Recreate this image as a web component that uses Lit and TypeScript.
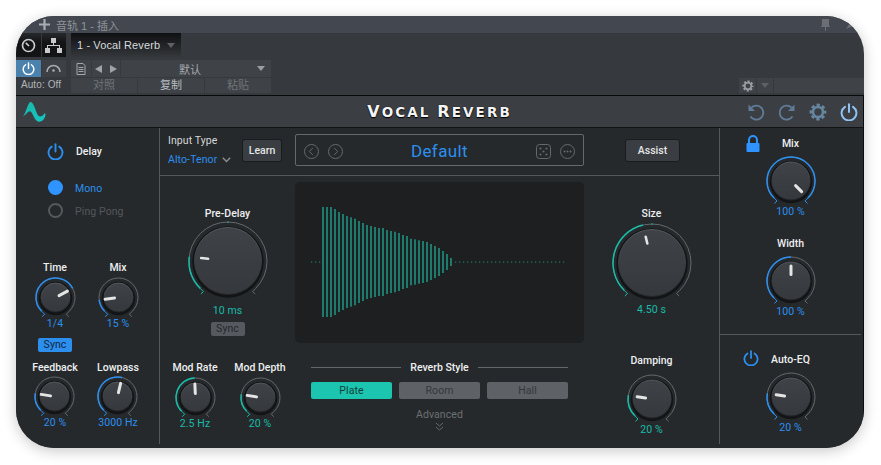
import { LitElement, html, css, svg } from "lit";
import { customElement } from "lit/decorators.js";

const BLUE = "#2c8fee";
const TEAL = "#19bba7";
const pt = (a: number, r: number, c: number) => {
  const t = (a * Math.PI) / 180;
  return [c + r * Math.sin(t), c - r * Math.cos(t)];
};
const f = (n: number) => n.toFixed(2);
const arc = (a0: number, a1: number, r: number, c: number) => {
  const [x0, y0] = pt(a0, r, c);
  const [x1, y1] = pt(a1, r, c);
  return `M${f(x0)} ${f(y0)}A${r} ${r} 0 ${a1 - a0 > 180 ? 1 : 0} 1 ${f(x1)} ${f(y1)}`;
};

type K = { label: string; value: string; v: number; cls: string; color: string; mark?: boolean };
const dims: Record<string, { r: number; cap: number; p0: number; p1: number; w: number; box: number }> = {
  s: { r: 19.5, cap: 14.5, p0: 4, p1: 13.5, w: 3, box: 41 },
  m: { r: 24, cap: 19, p0: 6.5, p1: 15, w: 3, box: 50 },
  l: { r: 39, cap: 33.5, p0: 20, p1: 27, w: 2.6, box: 80 },
};

function dial(k: K) {
  const size = k.cls.split(" ")[0];
  const d = dims[size];
  const c = d.box / 2;
  const ang = -135 + 270 * k.v;
  const [px0, py0] = pt(ang, d.p0, c);
  const [px1, py1] = pt(ang, d.p1, c);
  const [ex, ey] = pt(-135, d.r, c);
  const [rx, ry] = pt(135, d.r, c);
  const hookL = `M${f(ex)} ${f(ey)}l3 3l-2.6 2.4`;
  const hookR = `M${f(rx)} ${f(ry)}l-3 3l2.6 2.4`;
  const color = k.color === "blue" ? BLUE : TEAL;
  const full = k.v >= 1;
  return html`<svg class="dial" width=${d.box} height=${d.box} viewBox="0 0 ${d.box} ${d.box}">
    <defs>
      <linearGradient id="capg" x1="0" y1="0" x2="0" y2="1">
        <stop offset="0" stop-color="#3f4246"></stop>
        <stop offset="1" stop-color="#35383c"></stop>
      </linearGradient>
      <linearGradient id="rimg" x1="0" y1="0" x2="0" y2="1">
        <stop offset="0" stop-color="#55585c"></stop>
        <stop offset="0.5" stop-color="#3c3f43"></stop>
        <stop offset="1" stop-color="#222427"></stop>
      </linearGradient>
    </defs>
    ${svg`
      <path d=${arc(-135, 135, d.r, c)} fill="none" stroke="#66696c" stroke-width="1"></path>
      <path d=${hookR} fill="none" stroke=${full ? color : "#66696c"} stroke-width="1"></path>
      <path d=${arc(-135, ang, d.r, c)} fill="none" stroke=${color} stroke-width="1.5"></path>
      <path d=${hookL} fill="none" stroke=${color} stroke-width="1"></path>
      ${k.mark ? svg`<rect x=${c - 0.5} y=${c - d.r - 0.6} width="1" height="1.6" fill=${color}></rect>` : ""}
      <circle cx=${c} cy=${c + 1} r=${d.cap + 2.2} fill="#121416"></circle>
      <circle cx=${c} cy=${c} r=${d.cap} fill="url(#capg)" stroke="url(#rimg)" stroke-width="1"></circle>
      <line x1=${f(px0)} y1=${f(py0)} x2=${f(px1)} y2=${f(py1)} stroke="#e4e4e4" stroke-width=${d.w} stroke-linecap="round"></line>
    `}
  </svg>`;
}

function knob(k: K) {
  return html`<div class="knob ${k.cls}">
    <div class="klabel">${k.label}</div>
    ${dial(k)}
    <div class="kvalue ${k.color}">${k.value}</div>
  </div>`;
}

const power = (cls: string, s = 17) => html`<svg class=${cls} width=${s} height=${s} viewBox="0 0 18 18" fill="none" stroke="currentColor" stroke-width="2" stroke-linecap="round"><path d="M5 3.8A7.4 7.4 0 1 0 13 3.8"></path><path d="M9 1.2V9"></path></svg>`;

const gear = (cls: string, s: number) => html`<svg class=${cls} width=${s} height=${s} viewBox="0 0 18 18" fill="none" stroke="currentColor"><circle cx="9" cy="9" r="5" stroke-width="2.6"></circle><circle cx="9" cy="9" r="7" stroke-width="2.8" stroke-dasharray="3.2 2.3" stroke-dashoffset="1.6"></circle></svg>`;

const HALF = [55, 55, 55, 53, 50, 48, 46, 44.7, 43.3, 41, 39, 37, 36, 35, 34, 34, 32, 31, 30.3, 29, 27, 26, 23.3, 22.7, 21.7, 21, 20, 18, 16, 14, 11, 8, 4];
const dotsR = Array.from({ length: 28 }, (_, i) => 160 + i * 4);

@customElement("app-root")
export class AppRoot extends LitElement {
  static styles = css`
    :host { display: block; width: 881px; height: 465px; padding: 16px 17px 17px 16px; box-sizing: border-box; background: #fff; font-family: Roboto, "Noto Sans CJK SC", sans-serif; }
    .win { width: 848px; height: 432px; border-radius: 38px; overflow: hidden; background: #363a3e; box-shadow: 0 3px 14px rgba(0,0,0,.22); display: flex; flex-direction: column; }
    .titlebar { height: 17px; flex: none; background: #434750; display: flex; align-items: center; color: #8f9399; font: 11px "Liberation Sans", "Noto Sans CJK SC", sans-serif; padding-left: 23px; padding-right: 10px; }
    .plus { width: 11px; height: 11px; color: #a9adb2; margin-right: 6px; }
    .pin { margin-left: auto; color: #6b6f75; margin-right: 14px; }
    .pin2 { color: #6b6f75; margin-right: 0; }
    .toolbar { height: 62px; flex: none; display: flex; font: 11px "Liberation Sans", "Noto Sans CJK SC", sans-serif; color: #c9cdd2; }
    .tl { width: 50px; flex: none; }
    .tl-top { height: 24px; display: flex; gap: 1px; }
    .tl-top > div { flex: 1; background: linear-gradient(#26282b, #131416 40%); display: flex; align-items: center; justify-content: center; color: #c8cacc; }
    .tl-mid { height: 17px; display: flex; gap: 1px; margin-top: 3px; }
    .tl-mid > div { flex: 1; display: flex; align-items: center; justify-content: center; background: #3d4146; color: #a8acb1; }
    .tl-mid > div.on { background: #4b82ad; color: #fff; }
    .auto { text-align: center; height: 15px; line-height: 16px; font-size: 10px; color: #b0b4b9; letter-spacing: .1px; }
    .tm { width: 200px; flex: none; margin-left: 5px; }
    .tab { width: 110px; height: 24px; background: linear-gradient(#0f1012, #34373b); display: flex; align-items: center; padding-left: 6px; box-sizing: border-box; color: #d6dade; letter-spacing: .12px; }
    .tri-d { width: 0; height: 0; border-left: 4px solid transparent; border-right: 4px solid transparent; border-top: 5px solid #5d6166; }
    .tab .tri-d { margin-left: 7px; }
    .preset { height: 17px; margin-top: 3px; display: flex; gap: 1px; }
    .preset > div { background: #3f4348; display: flex; align-items: center; justify-content: center; color: #a5a9ae; }
    .p-doc { width: 20px; padding-right: 1px; box-sizing: border-box; }
    .p-nav { width: 28px; gap: 8px; }
    .tri-l { width: 0; height: 0; border-top: 4.5px solid transparent; border-bottom: 4.5px solid transparent; border-right: 7px solid #a0a4a9; }
    .tri-r { width: 0; height: 0; border-top: 4.5px solid transparent; border-bottom: 4.5px solid transparent; border-left: 7px solid #a0a4a9; }
    .p-name { flex: 1; padding-right: 10px; color: #9b9fa4; }
    .p-name .name { flex: 1; text-align: center; font-size: 11px; padding-left: 2px; }
    .p-name .tri-d { border-top-color: #9a9ea3; border-left-width: 4.5px; border-right-width: 4.5px; margin-right: -4px; }
    .copy { height: 15px; margin-top: 1px; display: flex; gap: 1px; }
    .copy > div { flex: 1; background: #3f4348; text-align: center; line-height: 15px; color: #6f7378; font-size: 11px; }
    .copy > div.lit { color: #b8bcc1; }
    .tr { margin-left: auto; align-self: flex-end; display: flex; gap: 1px; height: 15px; margin-bottom: 2px; }
    .tr > div { background: #3f4348; display: flex; align-items: center; justify-content: center; color: #9a9ea3; }
    .tr-g { width: 17px; }
    .tr-a { width: 16px; }
    .tr-r { width: 90px; }
    .plug { flex: 1; min-height: 0; display: flex; flex-direction: column; border-right: 1px solid #0b0c0d; }
    .head { height: 33px; flex: none; box-sizing: border-box; border-top: 1.5px solid #08090a; border-bottom: 1.5px solid #111214; background: #3b3f44; display: grid; grid-template-columns: 1fr auto 1fr; align-items: center; }
    .logo { margin-left: 7px; display: block; }
    .brand { font: 700 13.5px "DejaVu Sans", sans-serif; letter-spacing: 2.1px; color: #f4f4f4; text-shadow: 0 0 1px #000, 0 1px 1px #000; line-height: 20px; white-space: nowrap; }
    .brand b { font-size: 16px; font-weight: 700; }
    .hicons { display: flex; justify-content: flex-end; align-items: center; gap: 13px; padding-right: 5px; }
    .hicons .h { color: #607b97; }
    .hicons .g { color: #66859f; }
    .hicons .p { color: #8fc2f3; }
    .body { flex: 1; min-height: 0; display: flex; background: #25292c; padding-bottom: 4px; color: #eeeff0; font-size: 10.5px; font-weight: 400; letter-spacing: .1px; }
    .left { width: 144px; box-sizing: border-box; border-right: 1px solid #55585b; flex: none; padding-top: 15px; }
    .delay { display: flex; align-items: center; height: 16px; padding-left: 31px; gap: 12px; font-weight: 500; letter-spacing: 0; }
    .ico-blue { color: #2c8fee; display: block; }
    .radios { margin-top: 21px; padding-left: 32px; display: flex; flex-direction: column; gap: 8px; }
    .radio { display: flex; align-items: center; gap: 12px; height: 15px; color: #54575b; }
    .radio b { font-weight: 400; padding-top: 2px; }
    .radio.on { color: #2c8fee; }
    .dot { width: 15px; height: 15px; box-sizing: border-box; border-radius: 50%; border: 2px solid #55585c; }
    .radio.on .dot { background: #2f94ff; border-color: #2f94ff; }
    .lgrid { margin-top: 43px; padding-left: 7.5px; display: grid; grid-template-columns: 63px 63px; row-gap: 9px; }
    .cell { display: flex; flex-direction: column; align-items: center; }
    .knob { display: flex; flex-direction: column; align-items: center; }
    .klabel, .kvalue { height: 12px; line-height: 14px; white-space: nowrap; }
    .klabel { font-weight: 500; letter-spacing: 0; }
    .kvalue.blue { color: #2c8fee; }
    .kvalue.teal { color: #19bba7; }
    .dial { display: block; overflow: visible; }
    .knob.s .dial { margin-top: 3.5px; margin-bottom: -1px; }
    .knob.m .dial { margin-top: 7px; margin-bottom: -1px; }
    .knob.l .dial { margin-top: 2px; margin-bottom: 3px; }
    .knob.l.sz .dial { margin-top: 4px; margin-bottom: 0; }
    .knob.m.dm .dial { margin-top: 8px; }
    .tag { width: 34px; height: 14px; margin-top: 9px; border-radius: 2px; text-align: center; line-height: 14px; background: #2c8fee; color: #11263c; }
    .tag.off { background: #565a60; color: #25282b; margin-top: 6px; }
    .center { width: 559px; flex: none; display: flex; flex-direction: column; }
    .ctop { height: 48px; flex: none; box-sizing: border-box; border-bottom: 1px solid #55585b; display: flex; }
    .input { width: 74px; margin-left: 8px; padding-top: 6px; }
    .input .t { height: 13px; line-height: 13px; color: #d6d7d8; }
    .input .v { margin-top: 6px; height: 13px; line-height: 13px; color: #2c8fee; display: flex; align-items: center; gap: 5px; white-space: nowrap; }
    .btn { margin-top: 11px; height: 23px; box-sizing: border-box; background: #3a3d41; border: 1px solid #191b1d; border-radius: 3px; text-align: center; line-height: 21px; color: #e4e5e6; font-weight: 500; letter-spacing: 0; }
    .learn { width: 40px; }
    .assist { width: 55px; margin-left: 41px; }
    .pbox { width: 289px; height: 32px; margin-top: 6px; margin-left: 13px; box-sizing: border-box; border: 1px solid #66696c; border-radius: 2px; display: grid; grid-template-columns: 1fr auto 1fr; align-items: center; color: #66696c; }
    .pl { display: flex; gap: 9px; padding-left: 8px; }
    .pr { display: flex; gap: 9px; padding-right: 8px; justify-content: flex-end; }
    .pname { color: #2c8fee; font-size: 17px; letter-spacing: .4px; line-height: 32px; }
    .cmain { flex: 1; display: grid; grid-template-columns: 135px 289px 135px; }
    .cl, .cr { display: flex; flex-direction: column; align-items: center; padding-top: 31px; }
    .mods { display: grid; grid-template-columns: 65px 65px; margin-top: 25px; }
    .cm { padding-top: 6px; }
    .scope { width: 289px; height: 161px; background: #1d1f21; border-radius: 5px; display: block; }
    .style { padding: 0 16px; }
    .style-h { margin-top: 17px; height: 14px; display: flex; align-items: center; gap: 9px; white-space: nowrap; font-weight: 500; letter-spacing: 0; }
    .style-h i { flex: 1; height: 1px; background: #64676a; }
    .seg { display: grid; grid-template-columns: repeat(3, 81px); gap: 7px; margin-top: 8px; }
    .seg div { height: 17px; line-height: 17px; border-radius: 2px; text-align: center; background: #5e6267; color: #34373a; }
    .seg div.on { background: #1cc5b0; color: #133d38; }
    .adv { margin-top: 9px; height: 12px; line-height: 14px; text-align: center; color: #6d7073; }
    .chev { display: block; margin: 2px auto 0; color: #66696c; }
    .dmp { margin-top: 39px; }
    .right { flex: 1; box-sizing: border-box; border-left: 1px solid #55585b; display: flex; flex-direction: column; }
    .rtop { height: 207px; flex: none; box-sizing: border-box; margin-right: 2px; border-bottom: 1px solid #55585b; padding-top: 7px; display: flex; flex-direction: column; }
    .row3 { display: grid; grid-template-columns: 1fr auto 1fr; }
    .row3 .knob { margin-top: 2px; }
    .lock { margin-left: 26px; display: block; color: #2f94ff; }
    .pwr { margin-left: 23px; }
    .wd { margin-top: 20px; align-self: center; }
    .rbot { padding-top: 15px; margin-right: 2px; }
    .rbot .knob { margin-top: 3px; }
  `;

  render() {
    const wave = HALF.map((h, i) => svg`<rect x=${27 + i * 4} y=${(80 - h).toFixed(1)} width="2" height=${(2 * h).toFixed(1)} fill="#1e7a6c"></rect>`);
    const dotsLeft = [16, 20, 24].map((x) => svg`<rect x=${x} y="79.5" width="1.2" height="1.2" fill="#1e7a6c"></rect>`);
    const dots = dotsR.map((x) => svg`<rect x=${x} y="79.5" width="1.2" height="1.2" fill="#1e7a6c"></rect>`);
    return html`<div class="win">
      <div class="titlebar">
        <svg class="plus" viewBox="0 0 11 11"><path d="M5.5 0V11M0 5.5H11" stroke="currentColor" stroke-width="2.2"></path></svg>
        <span>音轨 1 - 插入</span>
        <svg class="pin" width="9" height="12" viewBox="0 0 9 12"><path d="M1 0H8V6L9 8H5V12H4V8H0L1 6Z" fill="currentColor"></path></svg>
        <svg class="pin2" width="10" height="10" viewBox="0 0 10 10"><path d="M2 9L6 3L9 6Z" fill="currentColor"></path></svg>
      </div>
      <div class="toolbar">
        <div class="tl">
          <div class="tl-top">
            <div><svg width="15" height="15" viewBox="0 0 15 15" fill="none" stroke="currentColor"><circle cx="7.5" cy="7.5" r="6" stroke-width="1.7"></circle><path d="M4.8 4.8L8 8" stroke-width="1.7"></path></svg></div>
            <div><svg width="19" height="17" viewBox="0 0 19 17" fill="currentColor"><rect x="7" y="1" width="5" height="5"></rect><rect x="1" y="11" width="5" height="5"></rect><rect x="13" y="11" width="5" height="5"></rect><path d="M9 6H10V8H16V11H15V9H4V11H3V8H9Z"></path></svg></div>
          </div>
          <div class="tl-mid">
            <div class="on">${power("", 13)}</div>
            <div><svg width="15" height="9" viewBox="0 0 15 9" fill="none" stroke="currentColor" stroke-width="1.6"><path d="M1 8A6.5 6.5 0 0 1 14 8"></path><circle cx="7.5" cy="6.5" r="1.3" fill="currentColor" stroke="none"></circle></svg></div>
          </div>
          <div class="auto">Auto: Off</div>
        </div>
        <div class="tm">
          <div class="tab">1 - Vocal Reverb<span class="tri-d"></span></div>
          <div class="preset">
            <div class="p-doc"><svg width="10" height="12" viewBox="0 0 10 12" fill="none" stroke="currentColor"><path d="M1 .5H7L9 2.5V11.5H1Z"></path><path d="M2.5 4.5H7.5M2.5 6.5H7.5M2.5 8.5H7.5"></path></svg></div>
            <div class="p-nav"><span class="tri-l"></span><span class="tri-r"></span></div>
            <div class="p-name"><span class="name">默认</span><span class="tri-d"></span></div>
          </div>
          <div class="copy"><div>对照</div><div class="lit">复制</div><div>粘贴</div></div>
        </div>
        <div class="tr">
          <div class="tr-g">${gear("", 12)}</div>
          <div class="tr-a"><span class="tri-d"></span></div>
          <div class="tr-r"></div>
        </div>
      </div>
      <div class="plug">
        <div class="head">
          <svg class="logo" width="23" height="22" viewBox="0 0 23 22"><defs><linearGradient id="lg" x1="0" y1="0" x2="1" y2="1"><stop offset="0" stop-color="#19b7a8"></stop><stop offset="1" stop-color="#12c7c2"></stop></linearGradient></defs><path d="M0 15.5C3 12 5 1 7.5 1C10.5 1 12 8 14 12.5C15.5 16 18 17 22 12L22.5 14C21.5 19 18 21.5 15 20.5C11 19 10 12 7.5 10.5C5.5 9.5 3 14 0 15.5Z" fill="url(#lg)"></path></svg>
          <div class="brand"><b>V</b>OCAL <b>R</b>EVERB</div>
          <div class="hicons">
            <svg class="h" width="18" height="18" viewBox="0 0 18 18" fill="none" stroke="currentColor" stroke-width="1.8"><path d="M4.5 4.5A7 7 0 1 1 3.5 13.5"></path><path d="M1.5 1.5V8H8Z" fill="currentColor" stroke="none"></path></svg>
            <svg class="h" width="18" height="18" viewBox="0 0 18 18" fill="none" stroke="currentColor" stroke-width="1.8"><path d="M13.5 4.5A7 7 0 1 0 14.5 13.5"></path><path d="M16.5 1.5V8H10Z" fill="currentColor" stroke="none"></path></svg>
            ${gear("g", 18)}
            ${power("p", 18)}
          </div>
        </div>
        <div class="body">
          <div class="left">
            <div class="delay">${power("ico-blue", 17)}<span>Delay</span></div>
            <div class="radios">
              <div class="radio on"><span class="dot"></span><b>Mono</b></div>
              <div class="radio"><span class="dot"></span><b>Ping Pong</b></div>
            </div>
            <div class="lgrid">
              <div class="cell">${knob({ label: "Time", value: "1/4", v: 0.73, cls: "s", color: "blue" })}<div class="tag">Sync</div></div>
              <div class="cell">${knob({ label: "Mix", value: "15 %", v: 0.14, cls: "s", color: "blue" })}</div>
              <div class="cell">${knob({ label: "Feedback", value: "20 %", v: 0.2, cls: "s", color: "blue" })}</div>
              <div class="cell">${knob({ label: "Lowpass", value: "3000 Hz", v: 0.55, cls: "s", color: "blue" })}</div>
            </div>
          </div>
          <div class="center">
            <div class="ctop">
              <div class="input">
                <div class="t">Input Type</div>
                <div class="v">Alto-Tenor<svg width="9" height="6" viewBox="0 0 9 6" fill="none" stroke="#8a8d90" stroke-width="1.5"><path d="M.8 .8L4.5 4.5L8.2 .8"></path></svg></div>
              </div>
              <div class="btn learn">Learn</div>
              <div class="pbox">
                <div class="pl">
                  <svg width="15" height="15" viewBox="0 0 15 15" fill="none" stroke="currentColor"><circle cx="7.5" cy="7.5" r="7"></circle><path d="M8.8 4L5.3 7.5L8.8 11"></path></svg>
                  <svg width="15" height="15" viewBox="0 0 15 15" fill="none" stroke="currentColor"><circle cx="7.5" cy="7.5" r="7"></circle><path d="M6.2 4L9.7 7.5L6.2 11"></path></svg>
                </div>
                <div class="pname">Default</div>
                <div class="pr">
                  <svg width="15" height="15" viewBox="0 0 15 15" fill="currentColor"><rect x=".5" y=".5" width="14" height="14" rx="3" fill="none" stroke="currentColor"></rect><circle cx="4.5" cy="4.5" r="1.1"></circle><circle cx="10.5" cy="4.5" r="1.1"></circle><circle cx="7.5" cy="7.5" r="1.1"></circle><circle cx="4.5" cy="10.5" r="1.1"></circle><circle cx="10.5" cy="10.5" r="1.1"></circle></svg>
                  <svg width="15" height="15" viewBox="0 0 15 15" fill="currentColor"><circle cx="7.5" cy="7.5" r="7" fill="none" stroke="currentColor"></circle><circle cx="4.5" cy="7.5" r="1"></circle><circle cx="7.5" cy="7.5" r="1"></circle><circle cx="10.5" cy="7.5" r="1"></circle></svg>
                </div>
              </div>
              <div class="btn assist">Assist</div>
            </div>
            <div class="cmain">
              <div class="cl">
                ${knob({ label: "Pre-Delay", value: "10 ms", v: 0.19, cls: "l", color: "teal", mark: true })}
                <div class="tag off">Sync</div>
                <div class="mods">
                  ${knob({ label: "Mod Rate", value: "2.5 Hz", v: 0.49, cls: "s", color: "teal" })}
                  ${knob({ label: "Mod Depth", value: "20 %", v: 0.2, cls: "s", color: "teal" })}
                </div>
              </div>
              <div class="cm">
                <svg class="scope" viewBox="0 0 289 161">${dotsLeft}${wave}${dots}</svg>
                <div class="style">
                  <div class="style-h"><i></i>Reverb Style<i></i></div>
                  <div class="seg"><div class="on">Plate</div><div>Room</div><div>Hall</div></div>
                  <div class="adv">Advanced</div>
                  <svg class="chev" width="9" height="9" viewBox="0 0 9 9" fill="none" stroke="currentColor"><path d="M1 1L4.5 4L8 1M1 5L4.5 8L8 5"></path></svg>
                </div>
              </div>
              <div class="cr">
                ${knob({ label: "Size", value: "4.50 s", v: 0.45, cls: "l sz", color: "teal", mark: true })}
                <div class="dmp">${knob({ label: "Damping", value: "20 %", v: 0.2, cls: "m dm", color: "teal" })}</div>
              </div>
            </div>
          </div>
          <div class="right">
            <div class="rtop">
              <div class="row3">
                <svg class="lock" width="14" height="17" viewBox="0 0 14 17" fill="currentColor"><path d="M3 8V5A4 4 0 0 1 11 5V8" fill="none" stroke="currentColor" stroke-width="2"></path><rect x="0.5" y="8" width="13" height="9" rx="1"></rect></svg>
                ${knob({ label: "Mix", value: "100 %", v: 1, cls: "m", color: "blue" })}
              </div>
              <div class="wd">${knob({ label: "Width", value: "100 %", v: 0.5, cls: "m", color: "blue" })}</div>
            </div>
            <div class="rbot">
              <div class="row3">
                <div class="pwr">${power("ico-blue", 16)}</div>
                ${knob({ label: "Auto-EQ", value: "20 %", v: 0.2, cls: "m", color: "blue" })}
              </div>
            </div>
          </div>
        </div>
      </div>
    </div>`;
  }
}
